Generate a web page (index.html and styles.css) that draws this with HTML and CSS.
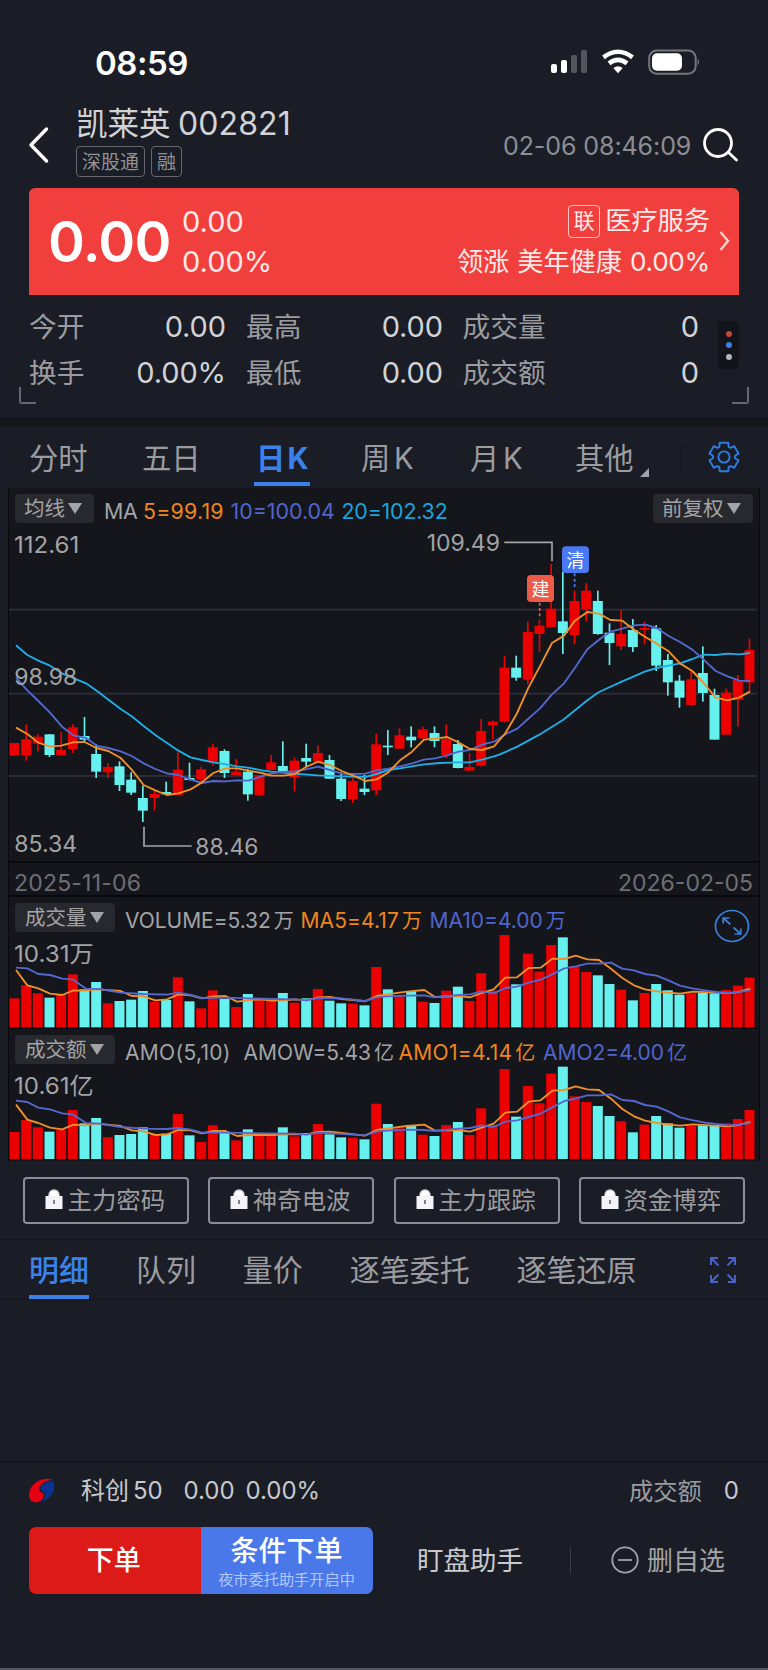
FILE: index.html
```html
<!DOCTYPE html>
<html lang="zh-CN">
<head>
<meta charset="utf-8">
<title>凯莱英 002821</title>
<link rel="stylesheet" href="styles.css">
</head>
<body>
<div class="phone">
  <div class="status">
    <span class="clock">08:59</span>
    <svg class="status-icons" width="150" height="28" viewBox="0 0 150 28">
      <g fill="#fff"><rect x="1" y="16" width="6" height="9" rx="2"/><rect x="11" y="12" width="6" height="13" rx="2"/></g>
      <g fill="#54565c"><rect x="21" y="7" width="6" height="18" rx="2"/><rect x="31" y="2" width="6" height="23" rx="2"/></g>
      <g fill="none" stroke="#fff" stroke-width="4.6"><path d="M53.500 9.300 Q68 -1.800 82.500 9.300"/><path d="M59 15.300 Q68 8.500 77 15.300"/></g>
      <path d="M63.300 20 Q68 16.500 72.700 20 L68 25.200Z" fill="#fff"/>
      <rect x="99.200" y="2.500" width="46.500" height="23.200" rx="7.500" fill="none" stroke="#75777d" stroke-width="2"/>
      <rect x="102" y="5.300" width="30" height="17.500" rx="5" fill="#fff"/>
      <path d="M147.700 10.500 Q150.500 14 147.700 17.500Z" fill="#75777d"/>
    </svg>
  </div>

  <header class="head">
    <svg class="back" width="22" height="38" viewBox="0 0 22 38"><path d="M19.500 3 L4 19 L19.500 35" fill="none" stroke="#fff" stroke-width="3.400" stroke-linecap="round" stroke-linejoin="round"/></svg>
    <div class="name">
      <h1><span class="cn">凯莱英</span><span class="code">002821</span></h1>
      <div class="tags"><span>深股通</span><span>融</span></div>
    </div>
    <span class="stamp">02-06 08:46:09</span>
    <svg class="search" width="38" height="38" viewBox="0 0 38 38"><g fill="none" stroke="#fff" stroke-width="2.800" stroke-linecap="round"><circle cx="16" cy="16" r="13.500"/><path d="M26.500 25.500 L34.500 33"/></g></svg>
  </header>

  <section class="quote">
    <b class="price">0.00</b>
    <div class="chg"><span>0.00</span><span>0.00%</span></div>
    <div class="sector">
      <div class="sector-name"><i>联</i><span>医疗服务</span></div>
      <div class="lead"><span>领涨</span><span>美年健康</span><span class="lead-pct">0.00%</span></div>
    </div>
    <svg class="go" width="12" height="22" viewBox="0 0 12 22"><path d="M1.500 2 L9 11 L1.500 20" fill="none" stroke="#fbd3d0" stroke-width="2.400"/></svg>
  </section>

  <section class="stats">
    <div class="stats-grid">
      <span class="k">今开</span><span class="v">0.00</span><span class="k">最高</span><span class="v">0.00</span><span class="k">成交量</span><span class="v">0</span>
      <span class="k">换手</span><span class="v">0.00%</span><span class="k">最低</span><span class="v">0.00</span><span class="k">成交额</span><span class="v">0</span>
    </div>
    <div class="dots"><i class="d1"></i><i class="d2"></i><i class="d3"></i></div>
    <i class="corner corner-l"></i><i class="corner corner-r"></i>
  </section>

  <nav class="periods">
    <span class="p1">分时</span><span class="p2">五日</span><span class="p3 on"><span>日</span>K</span><span class="p4"><span>周</span>K</span><span class="p5"><span>月</span>K</span><span class="p6">其他</span>
    <svg class="tri" width="9" height="9" viewBox="0 0 9 9"><path d="M9 0V9H0Z" fill="#a3a4a7"/></svg>
    <i class="rule"></i>
    <svg class="gear" width="32" height="32" viewBox="-16 -16 32 32"><g fill="none" stroke="#2f7ce0" stroke-width="1.900" stroke-linejoin="round"><path id="gearPath"/><circle r="5.600"/></g></svg>
  </nav>

  <section class="charts">
    <div class="panel main">
      <div class="legend">
        <span class="pill">均线<i></i></span>
        <span class="l-ma">MA</span><span class="l-5 c-or">5=99.19</span><span class="l-10 c-bl">10=100.04</span><span class="l-20 c-cy">20=102.32</span>
        <span class="pill pill-r">前复权<i></i></span>
      </div>
      <svg id="kline" width="750" height="333" viewBox="27 24 2250 999"></svg>
    </div>
    <div class="dates"><span>2025-11-06</span><span>2026-02-05</span></div>
    <div class="panel sub">
      <div class="legend">
        <span class="pill">成交量<i></i></span>
        <span class="v-1">VOLUME=5.32<em>万</em></span><span class="v-2 c-or">MA5=4.17<em>万</em></span><span class="v-3 c-bl">MA10=4.00<em>万</em></span>
        <svg class="expand" width="36" height="34" viewBox="-18 -17 36 34"><g fill="none" stroke="#3880dc" stroke-width="1.700"><ellipse rx="16.500" ry="15.500"/><path d="M-8.800 -2.500V-8H-2.500M-8.800 -8L-1.500 -1.500M1.500 1.500L8.800 8M8.800 2.500V8H2.500"/></g></svg>
      </div>
      <svg id="vol" width="750" height="94" viewBox="27 222 2250 282"></svg>
    </div>
    <div class="panel sub amount">
      <div class="legend">
        <span class="pill">成交额<i></i></span>
        <span class="a-1">AMO(5,10)</span><span class="a-2">AMOW=5.43<em>亿</em></span><span class="a-3 c-or">AMO1=4.14<em>亿</em></span><span class="a-4 c-bl">AMO2=4.00<em>亿</em></span>
      </div>
      <svg id="amo" width="750" height="95" viewBox="27 615 2250 285"></svg>
    </div>
  </section>

  <div class="locks">
    <button><svg class="lock" width="18" height="21" viewBox="0 0 18 21"><path d="M4 8V6.500a5 5.500 0 0 1 10 0V8Z" fill="#fff" stroke="#d8d8e0" stroke-width="1.500"/><rect x=".5" y="7" width="17" height="13" fill="#f4f4f8"/><path d="M9 11v4" stroke="#62646e" stroke-width="1.600"/></svg>主力密码</button>
    <button><svg class="lock" width="18" height="21" viewBox="0 0 18 21"><path d="M4 8V6.500a5 5.500 0 0 1 10 0V8Z" fill="#fff" stroke="#d8d8e0" stroke-width="1.500"/><rect x=".5" y="7" width="17" height="13" fill="#f4f4f8"/><path d="M9 11v4" stroke="#62646e" stroke-width="1.600"/></svg>神奇电波</button>
    <button><svg class="lock" width="18" height="21" viewBox="0 0 18 21"><path d="M4 8V6.500a5 5.500 0 0 1 10 0V8Z" fill="#fff" stroke="#d8d8e0" stroke-width="1.500"/><rect x=".5" y="7" width="17" height="13" fill="#f4f4f8"/><path d="M9 11v4" stroke="#62646e" stroke-width="1.600"/></svg>主力跟踪</button>
    <button><svg class="lock" width="18" height="21" viewBox="0 0 18 21"><path d="M4 8V6.500a5 5.500 0 0 1 10 0V8Z" fill="#fff" stroke="#d8d8e0" stroke-width="1.500"/><rect x=".5" y="7" width="17" height="13" fill="#f4f4f8"/><path d="M9 11v4" stroke="#62646e" stroke-width="1.600"/></svg>资金博弈</button>
  </div>

  <nav class="details">
    <span class="on">明细</span><span>队列</span><span>量价</span><span>逐笔委托</span><span>逐笔还原</span>
    <svg class="full" width="28" height="28" viewBox="0 0 28 28"><path d="M2 9V2H9M2 2L9.500 9.500M19 2H26V9M26 2L18.500 9.500M2 19V26H9M2 26L9.500 18.500M26 19V26H19M26 26L18.500 18.500" fill="none" stroke="#4a63c8" stroke-width="1.900"/></svg>
  </nav>
  <div class="blank"></div>

  <footer class="foot">
    <div class="index">
      <svg width="28" height="26" viewBox="0 0 28 26"><path d="M24.500 2.500C27.500 6 27 13 22.500 18C19.500 21.500 16 23 12.500 23.500C16.500 21 18 18 17 15.500C16 13 12 13.500 12.500 10C13.500 6 19 3.500 24.500 2.500Z" fill="#0a3390"/><path d="M24.500 1.500C15 -1 5.500 4 2 12C-.5 19 2 24.500 8 24.500C13 24 16 20 16 17C16 14 12.500 15 11.500 12.500C10.500 8 15 3.500 24.500 1.500Z" fill="#e50014"/></svg>
      <span class="i-name">科创</span><span class="i-50">50</span><span class="i-v">0.00</span><span class="i-p">0.00%</span>
      <span class="i-amt">成交额</span><span class="i-0">0</span>
    </div>
    <div class="actions">
      <div class="order">下单</div>
      <div class="cond"><b>条件下单</b><small>夜市委托助手开启中</small></div>
      <span class="watch">盯盘助手</span>
      <i class="sep"></i>
      <svg class="minus" width="28" height="28" viewBox="-14 -14 28 28"><g fill="none" stroke="#a3a4a7" stroke-width="1.800"><circle r="12.700"/><path d="M-7 0H7"/></g></svg>
      <span class="del">删自选</span>
    </div>
  </footer>
</div>
<script src="charts.js"></script>
</body>
</html>
```
FILE: styles.css
```css
* { box-sizing: border-box; }
html, body { margin: 0; background: #1a1d26; }
body { font-family: Inter, "Noto Sans CJK SC", sans-serif; color: #a3a4a7; }
svg { display: block; flex: none; }
i, em { font-style: normal; }
span, b, small { white-space: nowrap; }
.phone { width: 768px; height: 1670px; background: #1a1d26; border-bottom: 2px solid #55565e; overflow: hidden; }

.status { height: 100px; padding: 48px 0 0 95px; display: flex; align-items: flex-start; }
.clock { width: 455px; font-size: 33px; line-height: 30px; font-weight: 600; color: #fff; letter-spacing: -.5px; }

.head { height: 88px; display: flex; align-items: flex-start; padding-left: 27px; }
.back { margin-top: 26px; }
.name { margin-left: 27px; width: 300px; }
h1 { margin: 0; height: 46px; line-height: 47px; font-weight: 400; font-size: 31.500px; color: #d2d3d6; display: flex; }
.cn { width: 102px; }
.code { font-size: 32px; letter-spacing: .1px; }
.tags { display: flex; gap: 6px; }
.tags span { height: 31px; line-height: 31px; padding: 0 5px; border: 1.500px solid #66686e; border-radius: 4px; font-size: 19px; color: #919296; }
.stamp { margin-left: 127px; width: 199px; font-size: 25px; line-height: 30px; margin-top: 31px; color: #8d8e92; letter-spacing: -.08px; }
.search { margin-top: 27px; }

.quote { margin: 0 29px; height: 107px; background: #f03f3d; border-radius: 6px 6px 0 0; color: #fff; display: flex; position: relative; }
.price { width: 153px; padding-left: 19px; line-height: 108px; font-size: 56px; font-weight: 600; letter-spacing: -.7px; }
.chg { width: 180px; padding-top: 14px; font-size: 29px; display: flex; flex-direction: column; color: #ffe9e8; }
.chg span { line-height: 40px; }
.sector { flex: 1; padding: 13px 29px 0 0; color: #ffe9e8; font-size: 26.200px; display: flex; flex-direction: column; }
.sector-name { display: flex; align-items: center; justify-content: flex-end; height: 40px; gap: 5px; }
.sector-name span { line-height: 36px; }
.sector-name i { width: 32px; height: 33px; line-height: 30px; border: 1.500px solid #ffc5c2; border-radius: 4px; font-size: 21px; text-align: center; }
.lead { display: flex; justify-content: flex-end; gap: 8px; line-height: 41px; }
.lead-pct { letter-spacing: -.3px; }
.go { position: absolute; left: 690px; top: 42px; }

.stats { height: 122px; position: relative; display: flex; padding-left: 29px; }
.stats-grid { width: 670px; height: 92px; margin-top: 9px; display: grid; grid-template-columns: 54px 143px 74px 143px 103px 153px; grid-template-rows: 46px 46px; line-height: 46px; }
.k { font-size: 27.700px; color: #9b9ca0; }
.stats-grid .k:nth-child(6n+3), .stats-grid .k:nth-child(6n+5) { padding-left: 20px; }
.stats-grid .k:nth-child(6n+5) { padding-left: 19.500px; }
.v { font-size: 29px; text-align: right; color: #d2d3d6; letter-spacing: -.1px; }
.dots { margin: 26px 0 0 19px; width: 21px; height: 48px; background: #13141a; border-radius: 4px; display: flex; flex-direction: column; align-items: center; justify-content: center; gap: 5.500px; }
.dots i { width: 6px; height: 6px; border-radius: 3px; }
.d1 { background: #c6483a; } .d2 { background: #3a80e8; } .d3 { background: #b4b5b9; }
.corner { position: absolute; top: 92px; width: 17px; height: 17px; border: 2px solid #66686e; border-top: 0; }
.corner-l { left: 19px; border-right: 0; border-bottom-left-radius: 3px; } .corner-r { right: 19px; border-left: 0; border-bottom-right-radius: 3px; }

.periods { height: 71px; border-top: 10px solid #15161b; display: flex; align-items: flex-start; font-size: 29.300px; line-height: 63px; color: #9b9ca0; }
.periods > span { height: 59px; }
.p1 { margin-left: 29px; width: 113px; }
.p2 { width: 112px; }
.p3 { width: 56px; padding-left: 2px; }
.p3 span, .p4 span, .p5 span { display: inline-block; width: 33px; }
.p3 span { width: 31.500px; }
.p4 { margin-left: 51px; width: 109px; }
.p5 { width: 105px; }
.p6 { width: 65px; }
.on { color: #3a82ea; font-weight: 700; border-bottom: 4px solid #3a82ea; }
.tri { margin-top: 41px; }
.rule { width: 1px; height: 26px; margin: 17px 0 0 31px; background: #15161b; }
.gear { margin: 14px 0 0 27px; }

.charts { margin: 0 8px; height: 673px; border: 1.500px solid #08090d; border-width: 0 1.500px; background: #15161b; width: 752px; }
.panel { width: 750px; }
.legend { height: 40px; padding: 6px 6px 0; display: flex; align-items: flex-start; position: relative; font-size: 21.400px; line-height: 34px; color: #a3a4a7; }
.legend > span { flex: none; }
.legend em { margin-left: 3px; font-size: 20px; }
.pill { width: 79px; height: 29px; line-height: 27px; padding-left: 9px; border-radius: 4px; background: #27292e; font-size: 20.500px; display: flex; align-items: center; color: #a3a4a7; }
.pill i { border: 7.500px solid transparent; border-top: 11px solid #a3a4a7; border-bottom: 0; margin-left: 3px; }
.sub .pill { width: 100px; padding-left: 10px; }
.pill-r { width: 100px; margin-left: auto; }
.c-or { color: #ee8620; } .c-bl { color: #4f66cc; } .c-cy { color: #1ba3da; }
.l-ma { margin-left: 10px; width: 39px; letter-spacing: -.3px; }
.l-5 { width: 87.500px; letter-spacing: .2px; } .l-10 { width: 111px; } .l-20 { letter-spacing: -.2px; }
.dates { height: 36px; border: 2px solid #08090d; border-width: 2px 0; display: flex; justify-content: space-between; padding: 0 6px 0 5px; line-height: 40px; font-size: 23px; color: #6e6f74; }
.dates span:first-child { letter-spacing: .2px; }
.sub .legend { height: 37px; padding-top: 6px; line-height: 36px; font-size: 21px; }
.amount .legend { height: 37px; padding-top: 6px; border-top: 1px solid #08090d; line-height: 35px; }
.v-1 { margin-left: 10px; width: 175.500px; letter-spacing: -.05px; } .v-2 { width: 129px; letter-spacing: .1px; }
.a-1 { margin-left: 10px; width: 118.500px; letter-spacing: .3px; } .a-2 { width: 155px; } .a-3 { width: 144.500px; letter-spacing: .3px; } .a-4 { letter-spacing: 0; }
.expand { position: absolute; left: 704.500px; top: 12px; }
text { font-family: Inter, "Noto Sans CJK SC", sans-serif; }

.locks { display: flex; gap: 19.400px; padding: 16px 23px; height: 79px; border-bottom: 1px solid #15161b; }
.locks button { height: 47px; flex: 1; border: 2px solid #8c8d92; border-radius: 4px; background: none; color: #9b9ca0; font: 24.400px/40px Inter, "Noto Sans CJK SC", sans-serif; padding: 0 0 1px 20px; display: flex; align-items: center; gap: 4.500px; white-space: nowrap; }
.lock { margin-bottom: 1px; }
.details { height: 60px; border-bottom: 1px solid #15161b; padding-left: 29px; display: flex; gap: 46.900px; font-size: 30px; line-height: 60px; color: #9b9ca0; }
.details .on { font-weight: 500; width: 60px; }
.full { margin: 16px 0 0 26px; }
.blank { height: 161px; }

.foot { border-top: 2px solid #15161b; }
.index { height: 64px; padding: 0 29px 8px 28px; display: flex; align-items: center; font-size: 24px; line-height: 54px; color: #c8c9cc; }
.i-name { margin-left: 25px; width: 52px; } .i-50 { width: 50.500px; } .i-v { width: 62px; }
.i-amt { margin-left: auto; color: #9b9ca0; font-size: 24.300px; } .i-0 { margin-left: 22px; }
.actions { height: 67px; margin-left: 29px; display: flex; align-items: center; }
.order { width: 171.500px; height: 67px; background: #dc1b19; border-radius: 7px 0 0 7px; color: #fff; font-size: 27px; font-weight: 500; text-align: center; line-height: 68px; padding-right: 2px; }
.cond { width: 172px; height: 67px; background: #4a78e8; border-radius: 0 7px 7px 0; color: #fff; text-align: center; }
.cond b { display: block; font-size: 28px; line-height: 48px; height: 45px; font-weight: 500; }
.cond small { display: block; font-size: 15.200px; line-height: 16px; color: #b4c8f8; }
.watch { margin: -4px 0 0 44.500px; width: 153px; font-size: 26.500px; color: #c8c9cc; }
.sep { width: 1px; height: 27px; background: #3a3c46; }
.minus { margin: -2px 0 0 40px; } .del { margin: -4px 0 0 8px; font-size: 26px; }
```
FILE: charts.js
```js
// Series are stored on a grid of three units per screen pixel.
const RED = '#ea0000', CYAN = '#66f0ee', OR = '#f0902a', BL = '#5468d0', CY = '#20aee6';
const X0 = 43.5, STEP = 35;

// side, body top, body bottom, high, low
const candles = `R 669 707 669 707|R 658 706 613 722|R 650 671 642 694|C 643 705 642 711|R 690 706 636 706|R 622 687 613 699|C 648 659 591 663|C 702 755 672 774|R 741 757 729 774|C 739 795 724 813|C 779 818 757 825|C 834 872 797 906|R 822 834 812 871|C 816 823 785 825|R 749 825 697 825|C 774 780 728 781|R 748 778 740 786|R 682 726 671 738|C 693 759 688 774|R 755 765 717 766|C 755 823 747 842|R 765 826 765 826|R 727 750 705 750|C 738 755 664 755|R 722 773 712 815|C 714 725 671 740|R 699 725 676 725|C 720 776 705 776|C 776 837 757 843|R 783 838 775 849|C 806 816 764 825|R 673 811 642 825|C 677 682 630 705|R 646 686 625 686|C 650 661 619 682|R 628 655 620 658|C 639 663 619 682|R 657 705 613 715|C 672 744 660 745|R 741 752 699 752|R 633 737 597 740|R 605 615 602 657|R 443 605 407 607|C 443 473 407 482|R 336 479 304 493|R 317 342 299 396|R 266 322 132 322|C 304 339 155 402|R 243 345 212 373|R 212 267 189 304|C 243 342 212 344|C 338 369 310 435|R 342 379 270 390|C 330 381 297 396|R 324 330 305 373|C 325 437 315 453|C 420 487 402 527|C 482 533 465 563|R 478 555 453 555|C 459 519 379 545|C 525 659 506 659|R 518 644 506 644|R 480 540 465 620|R 390 487 355 516`
  .split('|').map(s => { const a = s.split(' '); return [a[0], ...a.slice(1).map(Number)]; });

const vol = [415,376,400,413,405,343,388,366,430,423,419,393,425,420,352,424,445,391,417,441,402,418,420,399,428,415,387,422,430,431,436,321,388,407,394,425,429,392,380,423,340,392,225,373,281,335,255,232,319,336,346,372,389,421,399,372,391,404,400,398,400,390,377,353];
const amo = [816,780,802,815,810,750,790,774,832,825,822,802,824,821,762,826,846,796,818,841,808,822,824,802,829,819,792,823,832,833,838,731,792,805,797,824,828,795,786,825,745,795,627,770,678,730,641,620,709,726,738,768,784,817,794,768,790,803,798,796,797,790,777,750];

const rect = (x, y, w, h, c) => `<rect x="${x}" y="${y}" width="${w}" height="${h}" fill="${c}"/>`;
const line = (pts, c) => `<polyline points="${pts}" fill="none" stroke="${c}" stroke-width="5.6" stroke-linejoin="round"/>`;
const label = (x, y, w, s) => `<text x="${x}" y="${y}" font-size="68" fill="#a3a4a7" textLength="${w}" lengthAdjust="spacingAndGlyphs">${s}</text>`;
const shift = (dx, s) => s.split(' ').map(p => { const [x, y] = p.split(','); return (+x + dx) + ',' + y; }).join(' ');

let k = '';
for (const y of [269, 521, 768]) k += rect(27, y - 3, 2243, 6, '#2b2c38');
candles.forEach(([s, t, b, h, l], i) => {
  const c = s === 'R' ? RED : CYAN, x = X0 + STEP * i;
  k += rect(x - 15, t, 30, b - t, c) + rect(x - 2.5, h, 5, l - h, c);
});
k += line('48,376 82,405 115,422 150,437 186,460 258,490 292,514 362,567 395,589 431,618 466,645 535,692 572,712 606,720 640,727 677,733 711,739 745,743 ' +
  shift(750, '35,751 64,755 133,761 204,766 275,769 346,771 380,762 415,750 450,745 486,739 522,733 570,729 625,727 660,727 696,719 732,709') + ' ' +
  shift(1500, '0,703 52,680 118,644 190,599 262,541 297,516 367,484 400,470 436,454 470,444 540,430 577,417 611,404 647,405 683,401 718,403 750,399'), CY);
k += line('48,473 82,511 115,543 150,578 186,620 220,646 258,654 292,678 325,684 362,694 395,708 431,730 466,747 501,760 535,765 572,779 606,789 640,783 677,784 711,781 745,782 ' +
  shift(750, '35,769 64,760 99,756 133,754 168,748 204,740 240,750 275,761 310,762 346,761 380,751 415,746 450,739 486,730 522,719 555,715 592,706 625,695 660,690 696,674 732,665') + ' ' +
  shift(1500, '18,642 52,626 84,597 120,565 156,523 192,490 225,443 262,388 297,359 331,335 367,326 400,316 436,314 470,324 506,348 540,366 577,389 611,419 647,453 683,469 718,482 750,483'), BL);
k += line('48,623 82,642 115,668 150,680 184,677 219,667 254,666 289,684 325,693 362,714 395,749 431,795 466,811 501,825 535,820 572,808 606,787 640,759 677,745 711,745 745,752 ' +
  shift(750, '35,759 64,767 99,767 133,763 168,741 204,725 240,735 275,753 310,767 346,783 380,778 415,757 450,721 486,695 522,659 555,656 592,651 625,667 660,687 696,690 732,679 765,641') + ' ' +
  shift(1500, '50,582 84,506 118,442 156,369 192,347 225,302 262,276 297,281 331,300 367,302 400,328 436,351 470,371 506,394 540,430 577,453 611,489 647,533 683,541 718,532 750,515'), OR);
k += label(42, 100, 196, '112.61') + label(43, 496, 189, '98.98') + label(43, 997, 188, '85.34');
k += label(1280, 94, 220, '109.49') + label(586, 1004, 189, '88.46');
k += '<path d="M1513 67H1656V124M432 920V978H575" fill="none" stroke="#a3a4a7" stroke-width="5"/>';
k += '<path d="M1619 248V294" stroke="#ee5a48" stroke-width="5" stroke-dasharray="9 7"/><path d="M1724 160V206" stroke="#4a78f0" stroke-width="5" stroke-dasharray="9 7"/>';
k += '<rect x="1581" y="165" width="81" height="81" rx="12" fill="#ee5a48"/><rect x="1686" y="79" width="81" height="80" rx="12" fill="#4a78f0"/>';
k += '<g fill="#fff" font-size="54" text-anchor="middle"><text x="1621.500" y="227">建</text><text x="1726.500" y="140">清</text></g>';
document.getElementById('kline').innerHTML = k;

function bars(id, tops, base, text, ty, ma10, ma5) {
  let s = label(42, ty, 239, text);
  tops.forEach((t, i) => { s += rect(X0 + STEP * i - 15, t, 30, base - t, candles[i][0] === 'R' ? RED : CYAN); });
  s += line(ma5, OR) + line(ma10, BL);
  document.getElementById(id).innerHTML = s;
}

bars('vol', vol, 502, '10.31万', 307,
  '48,323 82,325 115,342 150,345 187,356 220,359 258,386 300,387 362,398 431,402 501,404 535,398 572,405 606,414 677,413 745,415 815,417 885,418 920,421 955,414 1025,415 1095,423 1130,412 ' +
  shift(1140, '20,409 80,407 133,406 165,412 235,405 270,403 305,394 341,400 376,384 411,380 446,368 482,359 517,343 553,325 587,319 622,311 657,311 693,308 727,326 762,331 795,342 830,347 865,361 900,377 940,386 975,391 1010,396 1045,399 1075,396 1111,391'),
  '48,330 82,376 115,385 150,401 187,405 220,391 254,392 289,388 362,393 395,408 431,409 466,421 501,418 535,403 572,406 606,415 640,409 677,408 711,425 745,421 780,418 815,422 850,421 885,418 920,421 955,412 990,411 1025,417 1060,420 1095,424 1130,408 ' +
  shift(1140, '20,403 80,395 133,390 165,411 235,408 270,412 305,399 341,388 376,353 411,352 446,324 482,323 517,296 553,297 587,287 622,298 657,300 693,326 727,354 762,376 795,388 830,394 865,398 900,401 940,395 1010,398 1045,400 1075,396 1111,386'));

bars('amo', amo, 897, '10.61亿', 703,
  '48,722 82,726 115,743 150,748 187,760 220,764 258,789 300,791 362,801 431,806 501,807 535,804 572,809 606,818 677,818 815,820 885,821 920,824 955,818 1095,826 1130,815 ' +
  shift(1140, '20,812 80,809 133,810 165,813 235,806 270,804 305,796 341,801 376,785 411,781 446,771 482,761 517,742 553,723 587,716 622,706 657,706 693,703 727,720 762,723 795,735 830,740 865,754 900,772 940,781 975,788 1045,796 1075,794 1111,789'),
  '48,734 82,779 115,789 150,803 187,808 220,794 254,796 289,791 362,798 395,811 431,814 466,825 501,823 535,810 572,811 606,820 640,813 677,813 711,828 745,825 815,825 885,822 920,823 955,816 990,815 1095,827 1130,810 ' +
  shift(1140, '20,806 80,798 133,794 165,812 235,810 270,815 305,803 341,791 376,758 411,755 446,725 482,721 517,692 553,690 587,679 622,688 657,690 693,716 727,747 762,769 795,782 830,789 865,794 900,797 940,793 1045,799 1075,795 1111,786'));

// Six-toothed gear outline.
let g = '';
for (let i = 0; i < 6; i++) {
  const a = i * Math.PI / 3 - Math.PI / 2;
  [[-.42, 11.2], [-.29, 14.9], [.29, 14.9], [.42, 11.2]].forEach(([d, r]) => {
    g += (g ? 'L' : 'M') + (r * Math.cos(a + d)).toFixed(1) + ' ' + (r * Math.sin(a + d)).toFixed(1);
  });
}
document.getElementById('gearPath').setAttribute('d', g + 'Z');
```
